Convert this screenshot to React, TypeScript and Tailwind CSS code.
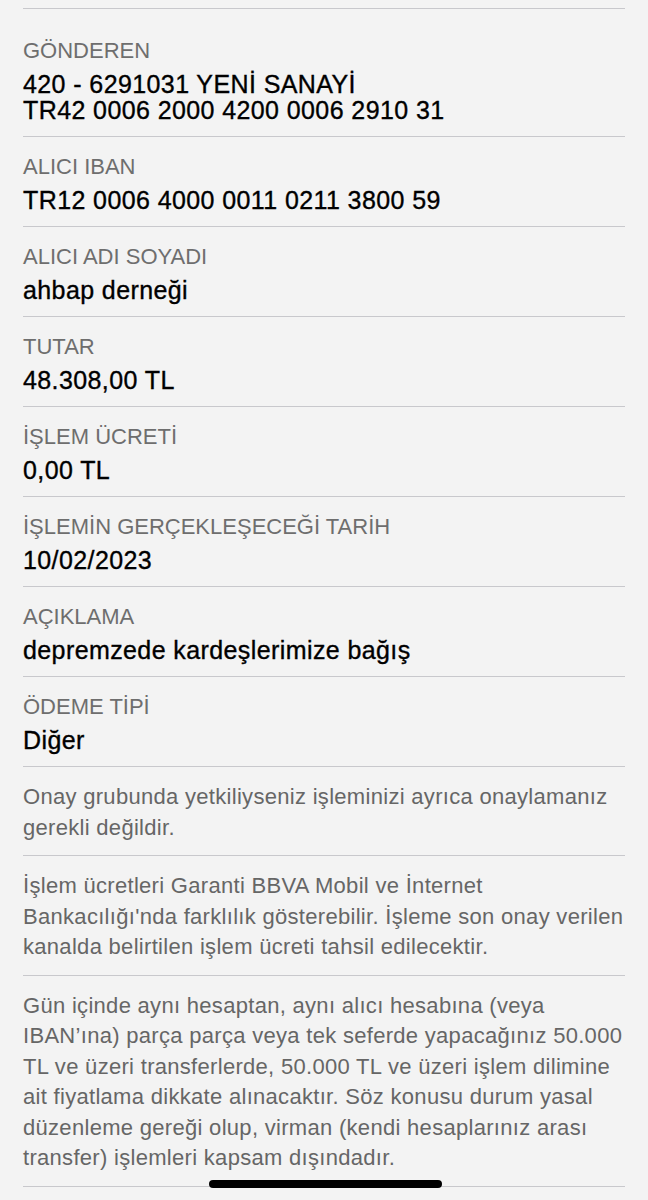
const fields = [
  { label: "ALICI IBAN", value: "TR12 0006 4000 0011 0211 3800 59" },
  { label: "ALICI ADI SOYADI", value: "ahbap derneği" },
  { label: "TUTAR", value: "48.308,00 TL" },
  { label: "İŞLEM ÜCRETİ", value: "0,00 TL" },
  { label: "İŞLEMİN GERÇEKLEŞECEĞİ TARİH", value: "10/02/2023" },
  { label: "AÇIKLAMA", value: "depremzede kardeşlerimize bağış" },
  { label: "ÖDEME TİPİ", value: "Diğer" },
];

// satır kırılımları ekrandaki gibi
const notes = [
  ["Onay grubunda yetkiliyseniz işleminizi ayrıca onaylamanız", "gerekli değildir."],
  [
    "İşlem ücretleri Garanti BBVA Mobil ve İnternet",
    "Bankacılığı'nda farklılık gösterebilir. İşleme son onay verilen",
    "kanalda belirtilen işlem ücreti tahsil edilecektir.",
  ],
  [
    "Gün içinde aynı hesaptan, aynı alıcı hesabına (veya",
    "IBAN’ına) parça parça veya tek seferde yapacağınız 50.000",
    "TL ve üzeri transferlerde, 50.000 TL ve üzeri işlem dilimine",
    "ait fiyatlama dikkate alınacaktır. Söz konusu durum yasal",
    "düzenleme gereği olup, virman (kendi hesaplarınız arası",
    "transfer) işlemleri kapsam dışındadır.",
  ],
];

const labelCls = "text-[22px] leading-[24px] text-[#6e6e6e]";
const valueCls =
  "mt-[8px] text-[25px] leading-[26px] tracking-[0.4px] text-black [-webkit-text-stroke:0.35px_black]";

export default function App() {
  return (
    <div
      className="relative min-h-[1200px] w-[648px] bg-[#f3f3f3] px-[23px] pt-[8px]"
      style={{ fontFamily: '"Liberation Sans", Arial, sans-serif' }}
    >
      <div className="border-t border-[#c8c8cc]" />

      <div className="border-b border-[#c8c8cc] pt-[30px] pb-[13px]">
        <div className={labelCls}>GÖNDEREN</div>
        <div className={valueCls}>
          <div>420 - 6291031 YENİ SANAYİ</div>
          <div>TR42 0006 2000 4200 0006 2910 31</div>
        </div>
      </div>

      {fields.map((f) => (
        <div key={f.label} className="border-b border-[#c8c8cc] pt-[18px] pb-[13px]">
          <div className={labelCls}>{f.label}</div>
          <div className={valueCls}>{f.value}</div>
        </div>
      ))}

      {notes.map((lines, i) => (
        <div
          key={i}
          className="border-b border-[#c8c8cc] pt-[15px] pb-[12px] text-[22px] leading-[30.5px] tracking-[0.3px] text-[#666666]"
        >
          {lines.map((l) => (
            <div key={l} className="whitespace-nowrap">
              {l}
            </div>
          ))}
        </div>
      ))}

      <div className="absolute left-[209px] top-[1180px] h-[8px] w-[233px] rounded-full bg-black" />
    </div>
  );
}
